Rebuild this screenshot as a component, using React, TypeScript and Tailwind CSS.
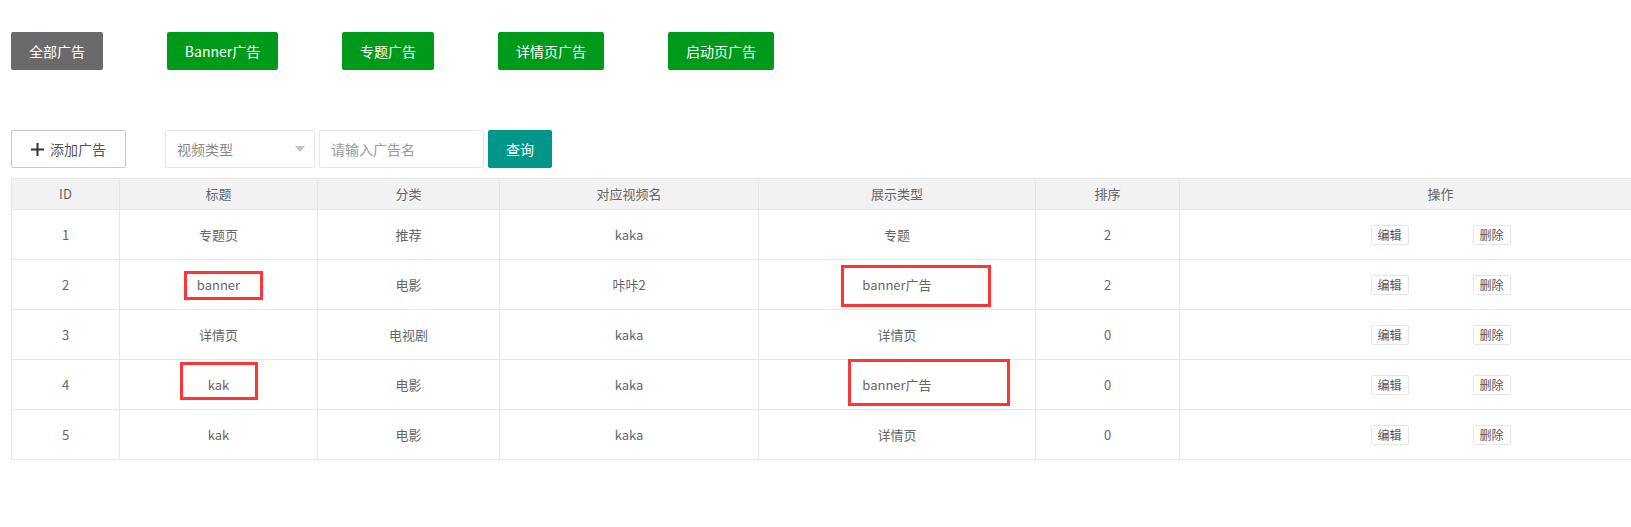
const tabs = [
  { label: "全部广告", w: "w-[92px]", bg: "bg-[#6a6a6a]" },
  { label: "Banner广告", w: "w-[111px]", bg: "bg-[#009a1b]" },
  { label: "专题广告", w: "w-[92px]", bg: "bg-[#009a1b]" },
  { label: "详情页广告", w: "w-[106px]", bg: "bg-[#009a1b]" },
  { label: "启动页广告", w: "w-[106px]", bg: "bg-[#009a1b]" },
];

const cols = [
  { title: "ID", w: "w-[108px]" },
  { title: "标题", w: "w-[198px]" },
  { title: "分类", w: "w-[182px]" },
  { title: "对应视频名", w: "w-[259px]" },
  { title: "展示类型", w: "w-[277px]" },
  { title: "排序", w: "w-[144px]" },
  { title: "操作", w: "w-[522px]" },
];

const rows = [
  { id: 1, title: "专题页", cate: "推荐", video: "kaka", show: "专题", sort: 2 },
  { id: 2, title: "banner", cate: "电影", video: "咔咔2", show: "banner广告", sort: 2 },
  { id: 3, title: "详情页", cate: "电视剧", video: "kaka", show: "详情页", sort: 0 },
  { id: 4, title: "kak", cate: "电影", video: "kaka", show: "banner广告", sort: 0 },
  { id: 5, title: "kak", cate: "电影", video: "kaka", show: "详情页", sort: 0 },
];

// red annotation boxes drawn over the screenshot
const marks = [
  "left-[184px] top-[271px] w-[79px] h-[29px]",
  "left-[180px] top-[362px] w-[78px] h-[38px]",
  "left-[841px] top-[265px] w-[150px] h-[42px]",
  "left-[848px] top-[359px] w-[162px] h-[47px]",
];

export default function App() {
  return (
    <div
      className="relative min-h-screen w-full overflow-hidden bg-white pl-[11px] text-[#666]"
      style={{ fontFamily: '"Noto Sans CJK SC", "Noto Sans", sans-serif' }}
    >
      <div className="flex gap-[64px] pt-[32px]">
        {tabs.map((t) => (
          <button
            key={t.label}
            className={`h-[38px] ${t.w} ${t.bg} rounded-[2px] text-[14px] text-white`}
          >
            {t.label}
          </button>
        ))}
      </div>

      <div className="mt-[60px] flex h-[38px] items-stretch">
        <button className="flex w-[115px] items-center justify-center gap-[6px] rounded-[2px] border border-[#c9c9c9] text-[14px] text-[#555]">
          <svg width="13" height="13" viewBox="0 0 13 13">
            <rect x="5.5" y="0" width="2" height="13" fill="#333" />
            <rect x="0" y="5.5" width="13" height="2" fill="#333" />
          </svg>
          添加广告
        </button>
        <div className="ml-[39px] flex w-[150px] items-center justify-between rounded-[2px] border border-[#e6e6e6] pl-[11px] pr-[9px] text-[14px] text-[#8a8a8a]">
          <span>视频类型</span>
          <span className="h-0 w-0 border-x-[5px] border-t-[6px] border-x-transparent border-t-[#c2c2c2]" />
        </div>
        <input
          placeholder="请输入广告名"
          className="ml-[4px] w-[165px] rounded-[2px] border border-[#e6e6e6] px-[11px] text-[14px] outline-none placeholder:text-[#9a9a9a]"
        />
        <button className="ml-[4px] w-[64px] rounded-[2px] bg-[#009688] text-[14px] text-white">
          查询
        </button>
      </div>

      <table className="mt-[10px] w-[1690px] table-fixed border-collapse text-[13px]">
        <thead>
          <tr className="bg-[#f2f2f2]">
            {cols.map((c) => (
              <th
                key={c.title}
                className={`${c.w} h-[31px] border border-[#e6e6e6] p-0 text-center font-normal`}
              >
                {c.title}
              </th>
            ))}
          </tr>
        </thead>
        <tbody>
          {rows.map((r) => (
            <tr key={r.id}>
              {[r.id, r.title, r.cate, r.video, r.show, r.sort].map((v, i) => (
                <td key={i} className="h-[50px] border border-[#e6e6e6] p-0 text-center">
                  {v}
                </td>
              ))}
              <td className="h-[50px] border border-[#e6e6e6] p-0">
                <div className="flex justify-center gap-[64px]">
                  <button className="h-[20px] w-[38px] rounded-[2px] border border-[#e6e6e6] text-[12px] leading-none text-[#555]">
                    编辑
                  </button>
                  <button className="h-[20px] w-[38px] rounded-[2px] border border-[#e6e6e6] text-[12px] leading-none text-[#555]">
                    删除
                  </button>
                </div>
              </td>
            </tr>
          ))}
        </tbody>
      </table>

      {marks.map((m) => (
        <div key={m} className={`pointer-events-none absolute border-[3px] border-[#ff3535] ${m}`} />
      ))}
    </div>
  );
}
